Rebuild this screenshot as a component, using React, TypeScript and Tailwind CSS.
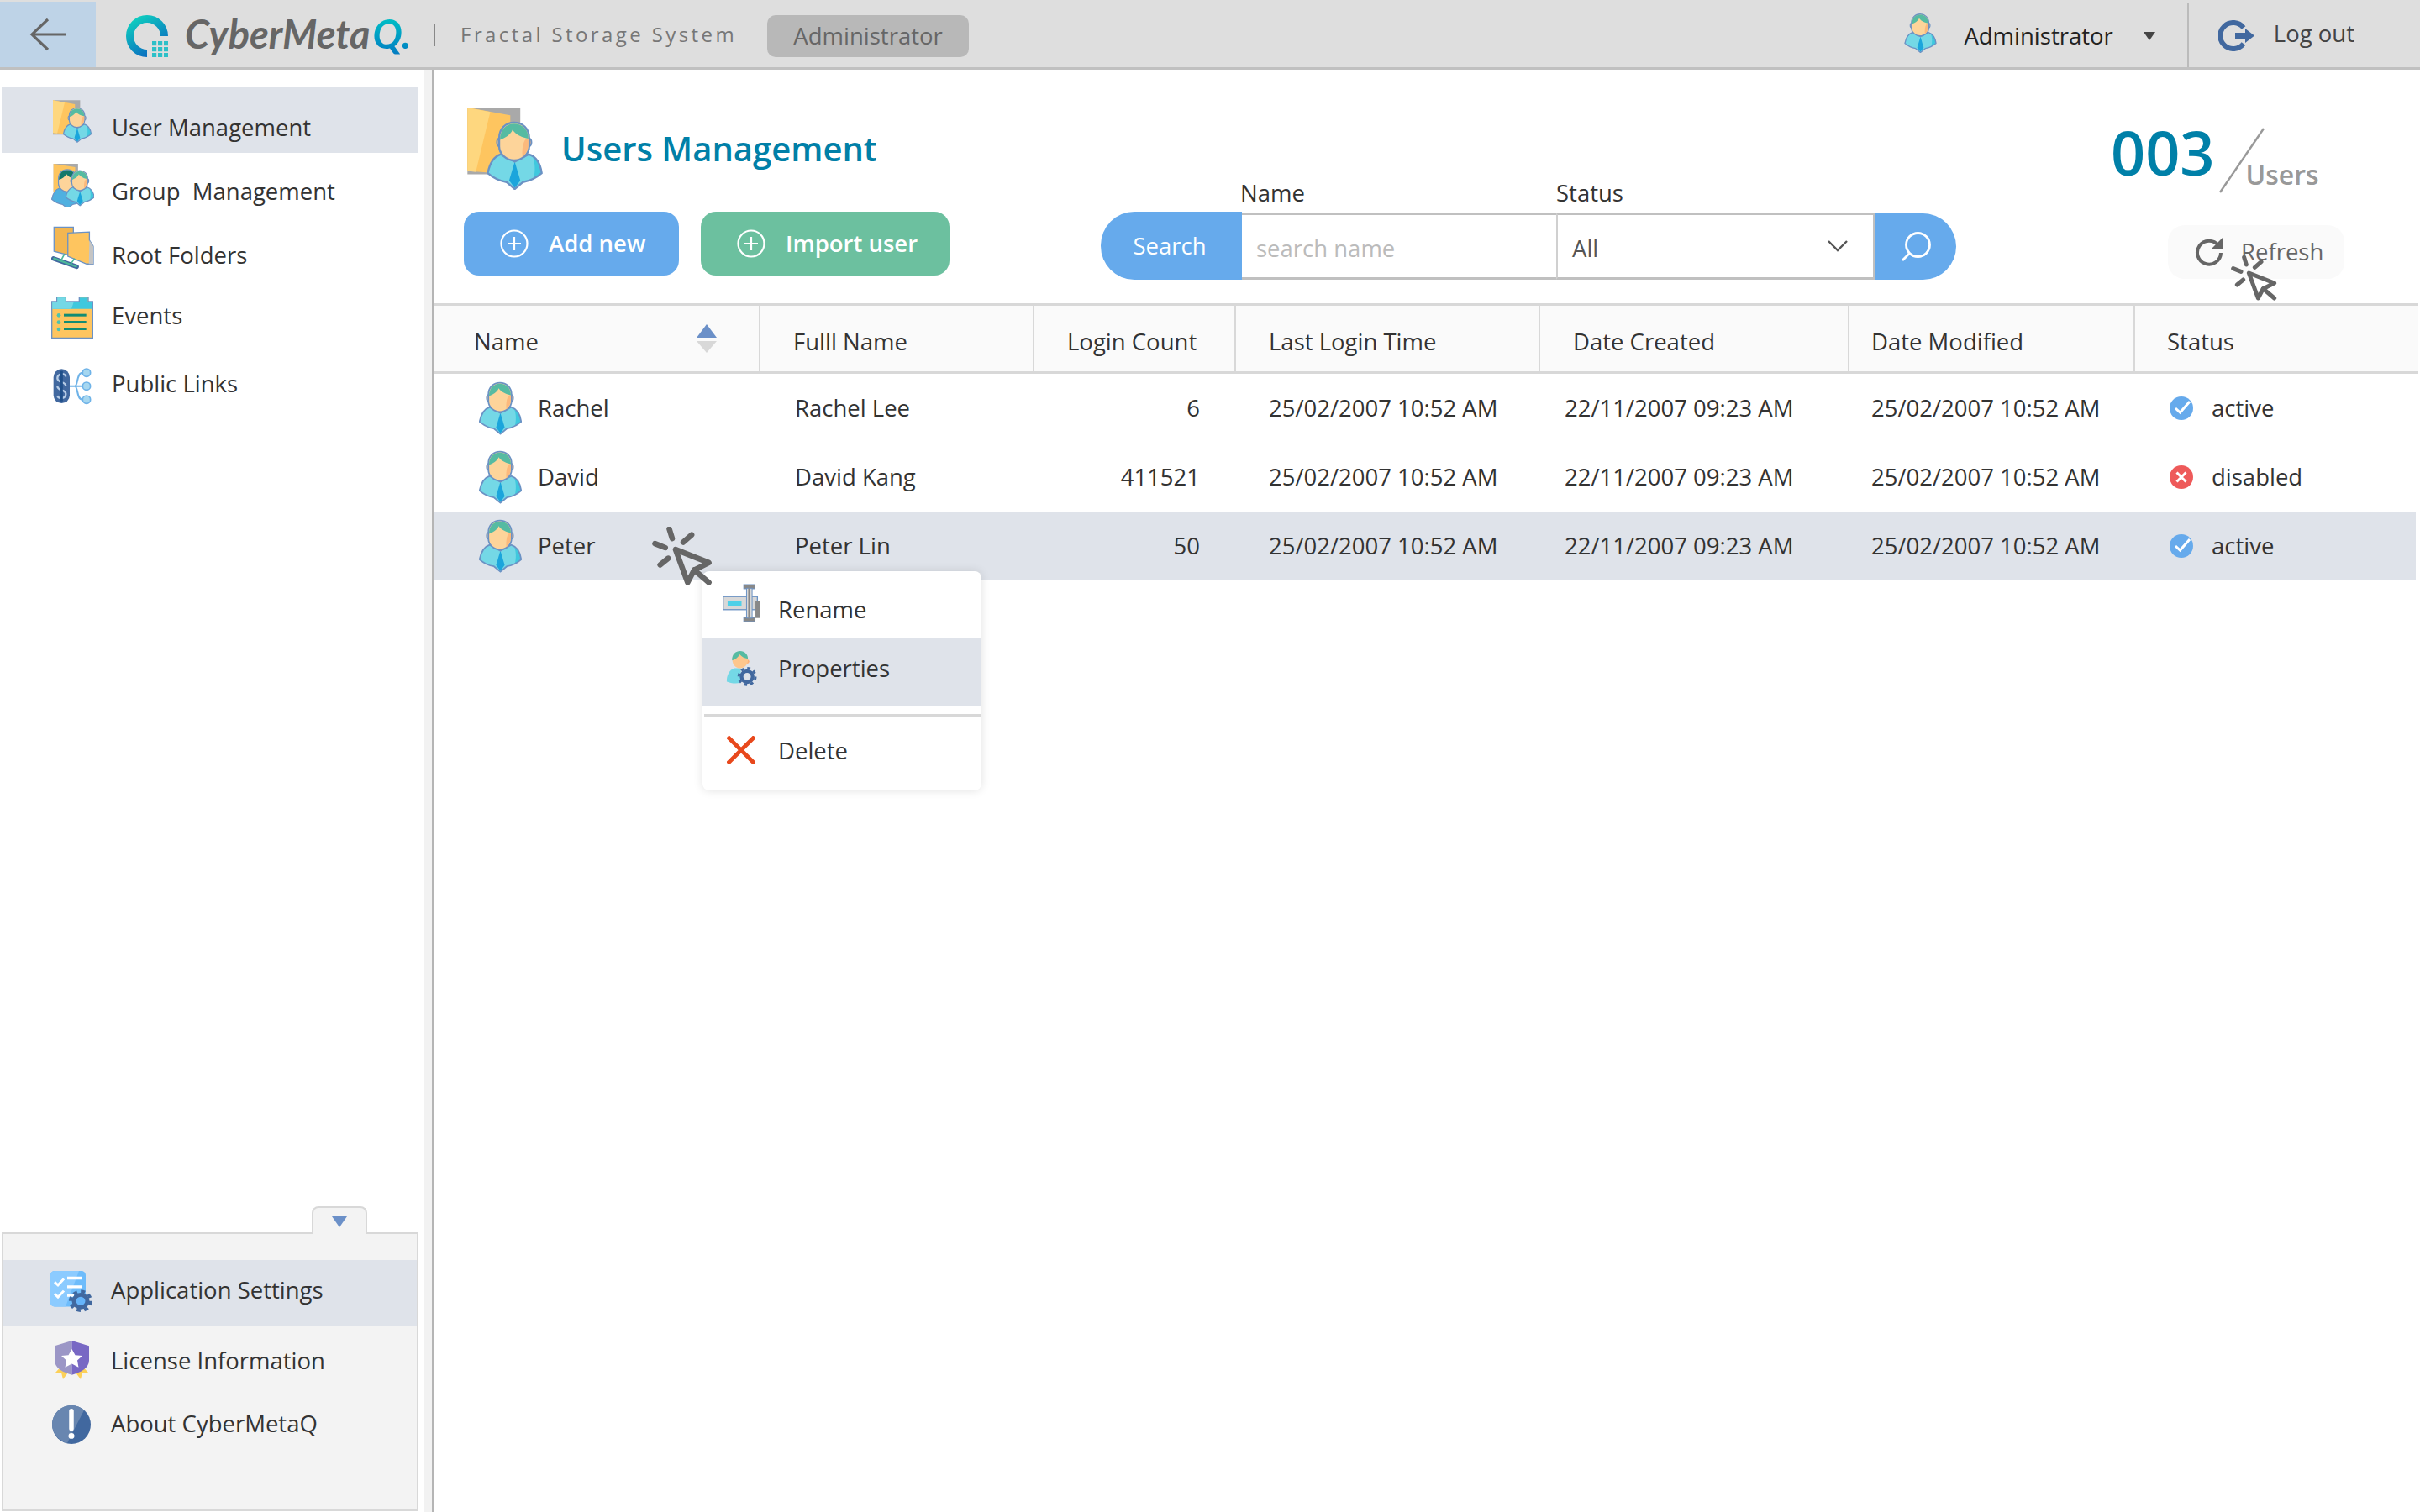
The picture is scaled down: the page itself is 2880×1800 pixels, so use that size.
import type { ReactNode } from "react";

const LINE = "#6b92c4";

function PersonShape() {
  return (
    <>
      <path d="M3 186 C10 150 25 126 50 118 L100 145 L150 118 C175 126 192 150 197 186 C175 205 150 215 130 218 L100 243 L70 218 C50 215 25 205 3 186Z" fill="#74d8e6" />
      <path d="M165 128 C182 142 192 160 197 186 C188 194 178 200 168 205 C174 180 174 150 165 128Z" fill="#3fc8de" />
      <path d="M100 145 L80 212 L100 240 L120 212Z" fill="#1ba5dc" />
      <path d="M3 186 C10 150 25 126 50 118 L100 145 L150 118 C175 126 192 150 197 186 C175 205 150 215 130 218 L100 243 L70 218 C50 215 25 205 3 186Z" fill="none" stroke={LINE} strokeWidth="7" strokeLinejoin="round" />
      <ellipse cx="46" cy="75" rx="10" ry="15" fill="#fcc78c" stroke={LINE} strokeWidth="6" />
      <ellipse cx="150" cy="75" rx="10" ry="15" fill="#fcb078" stroke={LINE} strokeWidth="6" />
      <path d="M44 60 C44 25 68 4 98 4 C128 4 152 25 152 60 L152 90 C152 118 125 140 98 140 C71 140 44 118 44 90Z" fill="#fdd49a" stroke={LINE} strokeWidth="7" />
      <path d="M128 128 C142 115 149 100 149 80 L149 60 C130 60 125 100 128 128Z" fill="#fcb97c" />
      <path d="M47 66 C47 28 70 8 98 8 C126 8 149 28 149 62 C130 58 105 50 92 30 C85 48 65 60 47 66Z" fill="#56bba2" />
    </>
  );
}

function Person({ className }: { className: string }) {
  return (
    <svg viewBox="0 0 200 246" className={className}>
      <PersonShape />
    </svg>
  );
}

function FolderUser({ className }: { className: string }) {
  return (
    <svg viewBox="0 0 270 296" className={className}>
      <path d="M0 0 H190 V240 H0Z" fill="#a9a9a9" />
      <path d="M0 0 L154 28 V240 L0 228Z" fill="#fec55f" />
      <path d="M0 0 L82 16 L30 232 L0 228Z" fill="#fed77f" />
      <g transform="translate(70 50)">
        <PersonShape />
      </g>
    </svg>
  );
}

function GroupIcon() {
  return (
    <svg viewBox="0 0 152 152" className="w-[51px] h-[51px]">
      <path d="M8 0 H95 V100 H8Z" fill="#a9a9a9" />
      <path d="M8 0 L85 12 V100 H8Z" fill="#fec55f" />
      <g transform="translate(0 18) scale(0.58)">
        <path d="M3 186 C10 150 25 126 50 118 L100 145 L150 118 C175 126 192 150 197 186 C175 205 150 215 130 218 L100 243 L70 218 C50 215 25 205 3 186Z" fill="#4fb0e0" stroke={LINE} strokeWidth="6" />
        <path d="M44 60 C44 25 68 4 98 4 C128 4 152 25 152 60 L152 90 C152 118 125 140 98 140 C71 140 44 118 44 90Z" fill="#fdd49a" stroke={LINE} strokeWidth="6" />
        <path d="M47 66 C47 28 70 8 98 8 C126 8 149 28 149 62 C130 58 105 50 92 30 C85 48 65 60 47 66Z" fill="#14786a" />
      </g>
      <g transform="translate(50 22) scale(0.52)">
        <PersonShape />
      </g>
    </svg>
  );
}

function RootIcon() {
  return (
    <svg viewBox="0 0 155 158" className="w-[51px] h-[53px]">
      <path d="M10 3 H80 V20 L80 108 L10 90Z" fill="#f3b650" stroke={LINE} strokeWidth="4" />
      <path d="M60 24 L138 20 V50 L152 72 V136 H128 L60 108Z" fill="#fec55f" stroke={LINE} strokeWidth="4" />
      <path d="M138 50 L152 72 V136 H136Z" fill="#c4c4c4" />
      <path d="M8 116 L92 146" stroke="#41689f" strokeWidth="16" strokeLinecap="round" />
      <path d="M10 116 L90 145" stroke="#4cb89a" strokeWidth="7" strokeLinecap="round" />
      <path d="M36 122 L48 100 M72 134 L84 116" stroke="#4cb89a" strokeWidth="5" />
    </svg>
  );
}

function EventsIcon() {
  return (
    <svg viewBox="0 0 150 150" className="w-[50px] h-[50px]">
      <path d="M20 2 H52 V18 H100 V2 H132 V18 H148 V148 H2 V18 H20Z" fill="#fec55f" stroke={LINE} strokeWidth="4" />
      <path d="M4 20 H22 V4 H50 V20 H102 V4 H130 V20 H146 V44 H4Z" fill="#3fc8de" />
      <path d="M4 20 H22 V4 H50 V20 H80 L72 44 H4Z" fill="#74d8e6" />
      <circle cx="27" cy="67" r="7" fill="#4cc3b0" />
      <circle cx="27" cy="92" r="7" fill="#4cc3b0" />
      <circle cx="27" cy="117" r="7" fill="#4cc3b0" />
      <rect x="45" y="62" width="80" height="9" fill="#128c74" />
      <rect x="45" y="87" width="80" height="9" fill="#128c74" />
      <rect x="45" y="111" width="80" height="9" fill="#128c74" />
    </svg>
  );
}

function LinksIcon() {
  return (
    <svg viewBox="0 0 138 135" className="w-[46px] h-[45px]">
      <rect x="2" y="7" width="58" height="122" rx="29" fill="#41689f" />
      <path d="M46 34 C44 20 16 22 16 40 C16 58 46 50 46 68 M16 102 C18 116 46 114 46 96 C46 78 16 86 16 68" fill="none" stroke="#b6cce6" strokeWidth="7" />
      <path d="M31 14 V122" stroke="#1f4f8a" strokeWidth="9" />
      <path d="M60 68 H105 M78 68 C90 68 84 20 105 20 M78 68 C90 68 84 116 105 116" fill="none" stroke="#6fb3e8" strokeWidth="6" />
      <circle cx="120" cy="20" r="14" fill="#a6d7f0" stroke="#6fb3e8" strokeWidth="5" />
      <circle cx="120" cy="68" r="14" fill="#a6d7f0" stroke="#6fb3e8" strokeWidth="5" />
      <circle cx="120" cy="116" r="14" fill="#a6d7f0" stroke="#6fb3e8" strokeWidth="5" />
    </svg>
  );
}

function SettingsIcon() {
  return (
    <svg viewBox="0 0 50 52" preserveAspectRatio="none" className="w-[50px] h-[49px]">
      <rect x="0" y="0" width="42" height="45" rx="5" fill="#6ebcfb" />
      <path d="M5 0 H34 L18 45 H5 C2 45 0 43 0 40 V5 C0 2 2 0 5 0Z" fill="#8ccbff" />
      <path d="M5 14 L9 18 L16 10 M5 29 L9 33 L16 25" fill="none" stroke="#fff" strokeWidth="3" />
      <path d="M20 9 H37 M20 20 H37 M20 31 H28" stroke="#fff" strokeWidth="3.5" />
      <circle cx="36" cy="38" r="12" fill="none" stroke="#41689f" strokeWidth="4" strokeDasharray="5 4.4" />
      <circle cx="36" cy="38" r="8" fill="#66b4fa" stroke="#41689f" strokeWidth="5" />
    </svg>
  );
}

function LicenseIcon() {
  return (
    <svg viewBox="0 0 41 52" preserveAspectRatio="none" className="w-[41px] h-[47px]">
      <path d="M6 36 L1 42 L8 42 L10 51 L16 42Z M35 36 L40 42 L33 42 L31 51 L25 42Z" fill="#fcd058" />
      <path d="M20.5 0 L0 7 V26 C0 36 10 42 20.5 45Z" fill="#9b96c6" />
      <path d="M20.5 0 L41 7 V26 C41 36 31 42 20.5 45Z" fill="#7868c4" />
      <path d="M20.5 11 L24.5 19 L33 20 L27 26 L28.5 35 L20.5 30.5 L12.5 35 L14 26 L8 20 L16.5 19Z" fill="#fff" />
    </svg>
  );
}

function AboutIcon() {
  return (
    <svg viewBox="0 0 46 48" preserveAspectRatio="none" className="w-[46px] h-[46px]">
      <ellipse cx="23" cy="24" rx="23" ry="24" fill="#41689f" />
      <path d="M23 0 C10 0 0 11 0 24 C0 35 8 44 18 47 L38 6 C34 2 29 0 23 0Z" fill="#6886b0" />
      <path d="M23 7 V29" stroke="#fff" strokeWidth="5.5" strokeLinecap="round" />
      <circle cx="23" cy="38" r="3.5" fill="#fff" />
    </svg>
  );
}

function Cursor({ className }: { className: string }) {
  return (
    <svg viewBox="0 0 165 160" className={className} fill="none" stroke="#666" strokeWidth="15" strokeLinecap="round" strokeLinejoin="round">
      <path d="M64 62 L97 152 L115 118 L155 98Z" />
      <path d="M115 118 L155 152" />
      <path d="M47 6 L55 32 M85 42 L108 22 M8 46 L36 57 M22 104 L44 86" />
    </svg>
  );
}

function PlusCircle() {
  return (
    <svg viewBox="0 0 34 34" className="w-[34px] h-[34px]" fill="none" stroke="#fff" strokeWidth="2.2">
      <circle cx="17" cy="17" r="15.5" />
      <path d="M17 9 V25 M9 17 H25" />
    </svg>
  );
}

function Tick() {
  return (
    <svg viewBox="0 0 28 28" className="w-[28px] h-[28px]">
      <circle cx="14" cy="14" r="14" fill="#66aaec" />
      <path d="M7 14 L12.5 19 L24 6" fill="none" stroke="#fff" strokeWidth="3" />
    </svg>
  );
}

function Cross() {
  return (
    <svg viewBox="0 0 28 28" className="w-[28px] h-[28px]">
      <circle cx="14" cy="14" r="14" fill="#ee5a5a" />
      <path d="M8.5 8.5 L19.5 19.5 M19.5 8.5 L8.5 19.5" stroke="#fff" strokeWidth="3" />
    </svg>
  );
}

type NavItem = {
  label: string;
  icon: ReactNode;
  row: string;
  iconTop: string;
  textTop: string;
};

const navItems: NavItem[] = [
  { label: "User Management", icon: <FolderUser className="w-[46px] h-[51px]" />, row: "h-[78px] bg-[#dfe3ea]", iconTop: "mt-[15px]", textTop: "mt-[29px]" },
  { label: "Group  Management", icon: <GroupIcon />, row: "h-[80px]", iconTop: "mt-[13px]", textTop: "mt-[27px]" },
  { label: "Root Folders", icon: <RootIcon />, row: "h-[80px]", iconTop: "mt-[7px]", textTop: "mt-[23px]" },
  { label: "Events", icon: <EventsIcon />, row: "h-[80px]", iconTop: "mt-[11px]", textTop: "mt-[15px]" },
  { label: "Public Links", icon: <LinksIcon />, row: "h-[80px]", iconTop: "mt-[15px]", textTop: "mt-[16px]" },
];

const bottomItems: NavItem[] = [
  { label: "Application Settings", icon: <SettingsIcon />, row: "h-[78px] bg-[#dfe3ea]", iconTop: "mt-[13px]", textTop: "mt-[17px]" },
  { label: "License Information", icon: <LicenseIcon />, row: "h-[80px]", iconTop: "mt-[18px]", textTop: "mt-[23px]" },
  { label: "About CyberMetaQ", icon: <AboutIcon />, row: "h-[80px]", iconTop: "mt-[15px]", textTop: "mt-[18px]" },
];

function NavRow({ item, inset }: { item: NavItem; inset: string }) {
  return (
    <div className={`flex items-start ${inset} ${item.row}`}>
      <div className={`w-[52px] flex justify-center shrink-0 ${item.iconTop}`}>{item.icon}</div>
      <span className={`ml-[21px] leading-[38px] whitespace-pre ${item.textTop}`}>{item.label}</span>
    </div>
  );
}

const users = [
  { name: "Rachel", full: "Rachel Lee", count: "6", status: "active", row: "h-[81px]" },
  { name: "David", full: "David Kang", count: "411521", status: "disabled", row: "h-[84px]" },
  { name: "Peter", full: "Peter Lin", count: "50", status: "active", row: "h-[80px] bg-[#dfe3ea]" },
];

const COLS = "grid grid-cols-[389px_326px_240px_362px_368px_340px_1fr]";

function HeadCell({ pad, label, extra, last }: { pad: string; label: string; extra?: ReactNode; last?: boolean }) {
  return (
    <div className={`flex items-center ${pad} ${last ? "" : "border-r-[2px] border-[#d8d8d8]"}`}>
      <span className="pt-[8px]">{label}</span>
      {extra}
    </div>
  );
}

export default function App() {
  return (
    <div className="relative w-[2880px] h-[1800px] overflow-hidden bg-white text-[#333] text-[27.5px] font-['Open_Sans',sans-serif]">
      {/* Top bar */}
      <header className="flex h-[83px] bg-[#dedede] border-b-[3px] border-[#c0c0c0]">
        <div className="w-[114px] mt-[2px] bg-[#bed3e7] flex items-center justify-center">
          <svg viewBox="0 0 44 40" className="w-[44px] h-[40px]" fill="none" stroke="#666" strokeWidth="3.2">
            <path d="M22 2 L3 20 L22 38 M3 20 H43" />
          </svg>
        </div>
        <svg viewBox="0 0 50 50" className="ml-[36px] mt-[18px] w-[50px] h-[50px]">
          <defs>
            <linearGradient id="ring" x1="0" y1="0" x2="0.6" y2="1">
              <stop offset="0" stopColor="#0fd2bf" />
              <stop offset="1" stopColor="#0b70c0" />
            </linearGradient>
          </defs>
          <path d="M45.5 25 A20.5 20.5 0 1 0 25 45.5" fill="none" stroke="url(#ring)" strokeWidth="9" />
          {[31, 38, 45].map((y) =>
            [31, 38, 45].map((x) => <rect key={`${x}-${y}`} x={x} y={y} width="5.2" height="5.2" fill="#2cc0c8" />),
          )}
        </svg>
        <div className="ml-[20px] mt-[8px] h-[64px] flex font-['Lato',sans-serif] font-bold italic text-[47px] leading-[64px] text-[#666]">
          <span>CyberMeta</span>
          <span className="ml-[3px] bg-linear-to-b from-[#10d4c4] to-[#0b70c0] bg-clip-text text-transparent pr-[6px]">Q.</span>
        </div>
        <div className="ml-[21px] mt-[29px] w-[2px] h-[26px] bg-[#888]" />
        <span className="ml-[30px] mt-[22px] text-[24px] leading-[38px] tracking-[3.4px] text-[#777]">Fractal Storage System</span>
        <div className="ml-[36px] mt-[18px] w-[240px] h-[50px] rounded-[10px] bg-[#b8b8b8] text-[#666] flex items-center justify-center">Administrator</div>
        <div className="ml-auto flex">
          <Person className="mt-[16px] w-[39px] h-[47px]" />
          <span className="ml-[32px] mt-[24px] leading-[38px] text-[#222]">Administrator</span>
          <div className="ml-[36px] mt-[38px] w-0 h-0 border-x-[7px] border-x-transparent border-t-[10px] border-t-[#444]" />
          <div className="ml-[38px] mt-[4px] w-[2px] h-[76px] bg-[#bbb]" />
          <svg viewBox="0 0 43 37" className="ml-[35px] mt-[24px] w-[43px] h-[37px]">
            <path d="M30 9 A15.5 15.5 0 1 0 30 28" fill="none" stroke="#41689f" strokeWidth="6" />
            <path d="M20 15 H32 V10 L43 18.5 L32 27 V22 H20Z" fill="#41689f" />
          </svg>
          <span className="ml-[23px] mr-[78px] mt-[21px] leading-[38px] text-[#444]">Log out</span>
        </div>
      </header>

      <div className="flex h-[1717px]">
        {/* Sidebar */}
        <aside className="w-[516px] shrink-0 flex border-r-[2px] border-[#b5b5b5]">
          <div className="w-[505px] flex flex-col">
            <nav className="pt-[21px] ml-[2px] w-[496px]">
              {navItems.map((item) => (
                <NavRow key={item.label} item={item} inset="pl-[58px]" />
              ))}
            </nav>
            <div className="relative mt-auto ml-[2px] w-[496px] h-[332px] mb-[1px] bg-[#f3f3f3] border-[2px] border-[#d8d8d8] pt-[31px]">
              <div className="absolute -top-[33px] left-[367px] w-[66px] h-[33px] bg-[#f3f3f3] border-x-[2px] border-t-[2px] border-[#d8d8d8] rounded-t-[8px] flex justify-center pt-[10px]">
                <div className="w-0 h-0 border-x-[9px] border-x-transparent border-t-[13px] border-t-[#6b90c8]" />
              </div>
              {bottomItems.map((item) => (
                <NavRow key={item.label} item={item} inset="pl-[55px]" />
              ))}
            </div>
          </div>
          <div className="w-[9px] bg-[#f2f2f2]" />
        </aside>

        {/* Main */}
        <main className="flex-1 min-w-0">
          <div className="flex h-[278px]">
            <div className="w-[794px] shrink-0 pl-[36px] pt-[45px]">
              <div className="flex items-center h-[98px]">
                <FolderUser className="ml-[4px] w-[90px] h-[98px]" />
                <h1 className="ml-[22px] text-[40px] font-semibold text-[#0080a8] leading-[60px]">Users Management</h1>
              </div>
              <div className="flex mt-[26px] gap-[26px] text-white font-[560]">
                <div className="w-[256px] h-[76px] rounded-[18px] bg-[#66aaec] flex items-center pl-[43px]">
                  <PlusCircle />
                  <span className="ml-[24px] -mt-[1px]">Add new</span>
                </div>
                <div className="w-[296px] h-[76px] rounded-[18px] bg-[#6cc09f] flex items-center pl-[43px]">
                  <PlusCircle />
                  <span className="ml-[24px] -mt-[1px]">Import user</span>
                </div>
              </div>
            </div>

            <div className="w-[1018px] shrink-0 pt-[128px]">
              <div className="flex pl-[166px] leading-[38px]">
                <span className="w-[376px]">Name</span>
                <span>Status</span>
              </div>
              <div className="flex h-[81px] mt-[3px]">
                <div className="w-[168px] pr-[4px] rounded-l-[40px] bg-[#66aaec] text-white font-medium flex items-center justify-center">Search</div>
                <div className="w-[374px] border-y-[3px] border-[#c0c0c0] flex items-center pl-[17px] pt-[6px] text-[#bbb] mt-[1px]">search name</div>
                <div className="w-[379px] border-y-[3px] border-x-[2px] border-[#c0c0c0] border-l-[#d0d0d0] flex items-center pl-[17px] pr-[30px] pt-[6px] justify-between text-[#555] mt-[1px]">
                  <span>All</span>
                  <svg viewBox="0 0 24 14" className="w-[24px] h-[14px] -mt-[6px]" fill="none" stroke="#555" strokeWidth="2.4">
                    <path d="M1 1 L12 12 L23 1" />
                  </svg>
                </div>
                <div className="w-[97px] mt-[2px] h-[79px] rounded-r-[40px] bg-[#66aaec] flex items-center justify-center">
                  <svg viewBox="0 0 36 36" className="w-[36px] h-[36px]" fill="none" stroke="#fff" strokeWidth="2.8">
                    <circle cx="20.5" cy="15.5" r="14" />
                    <path d="M10 26 L2 34" />
                  </svg>
                </div>
              </div>
            </div>

            <div className="flex-1 pt-[61px]">
              <div className="flex items-start h-[84px] ml-[184px]">
                <span className="text-[72px] font-semibold leading-[74px] text-[#0080a8]">003</span>
                <svg viewBox="0 0 54 78" className="ml-[5px] mt-[8px] w-[54px] h-[78px] shrink-0" fill="none" stroke="#999" strokeWidth="2.4">
                  <path d="M53 1 L1 77" />
                </svg>
                <span className="-ml-[22px] mt-[41px] text-[32px] leading-[46px] font-semibold text-[#999]">Users</span>
              </div>
              <div className="ml-[252px] mt-[40px] w-[210px] h-[64px] rounded-[20px] bg-[#fafafa] flex items-center pl-[32px] text-[#666]">
                <svg viewBox="0 0 34 34" className="w-[34px] h-[34px]">
                  <path d="M28 9 A14 14 0 1 0 31 18" fill="none" stroke="#666" strokeWidth="4" />
                  <path d="M33 0 V14 H19Z" fill="#666" />
                </svg>
                <span className="ml-[21px]">Refresh</span>
              </div>
            </div>
          </div>

          {/* Table */}
          <div className={`${COLS} mr-[2px] h-[84px] bg-[#fafafa] border-y-[3px] border-[#d8d8d8] font-[530]`}>
            <HeadCell
              pad="pl-[48px] pr-[50px] justify-between"
              label="Name"
              extra={
                <div className="flex flex-col gap-[4px]">
                  <div className="w-0 h-0 border-x-[12px] border-x-transparent border-b-[16px] border-b-[#6b90c8]" />
                  <div className="w-0 h-0 border-x-[12px] border-x-transparent border-t-[14px] border-t-[#d8d8d8]" />
                </div>
              }
            />
            <HeadCell pad="pl-[39px]" label="Fulll Name" />
            <HeadCell pad="pl-[39px]" label="Login Count" />
            <HeadCell pad="pl-[39px]" label="Last Login Time" />
            <HeadCell pad="pl-[39px]" label="Date Created" />
            <HeadCell pad="pl-[26px]" label="Date Modified" />
            <HeadCell pad="pl-[38px]" label="Status" last />
          </div>
          <div className="mr-[5px]">
            {users.map((u) => (
              <div key={u.name} className={`${COLS} items-center ${u.row}`}>
                <div className="flex items-center pl-[54px]">
                  <Person className="w-[51px] h-[64px]" />
                  <span className="ml-[19px]">{u.name}</span>
                </div>
                <div className="pl-[41px]">{u.full}</div>
                <div className="pr-[43px] text-right">{u.count}</div>
                <div className="pl-[39px]">25/02/2007 10:52 AM</div>
                <div className="pl-[29px]">22/11/2007 09:23 AM</div>
                <div className="pl-[26px]">25/02/2007 10:52 AM</div>
                <div className="pl-[41px] flex items-center">
                  {u.status === "active" ? <Tick /> : <Cross />}
                  <span className="ml-[22px]">{u.status}</span>
                </div>
              </div>
            ))}
          </div>
        </main>
      </div>

      {/* Context menu */}
      <div className="absolute left-[836px] top-[680px] w-[332px] h-[261px] bg-white rounded-[8px] shadow-[0_0_12px_rgba(0,0,0,0.12)] overflow-hidden">
        <div className="h-[80px] flex items-center pl-[24px]">
          <div className="w-[45px] flex justify-center -mt-[4px]">
            <svg viewBox="0 0 136 137" className="w-[45px] h-[46px]">
              <rect x="2" y="45" width="123" height="47" fill="#d8d8d8" stroke={LINE} strokeWidth="4" />
              <rect x="18" y="60" width="50" height="18" fill="#4fd0e8" />
              <rect x="76" y="2" width="40" height="15" fill="#888" stroke={LINE} strokeWidth="3" />
              <rect x="76" y="120" width="40" height="15" fill="#888" stroke={LINE} strokeWidth="3" />
              <rect x="86" y="15" width="20" height="107" fill="#d8d8d8" stroke={LINE} strokeWidth="3" />
              <rect x="92" y="15" width="6" height="107" fill="#888" />
              <rect x="118" y="62" width="18" height="60" fill="#888" />
            </svg>
          </div>
          <span className="ml-[21px] pt-[12px]">Rename</span>
        </div>
        <div className="h-[81px] bg-[#dfe3ea] flex items-center pl-[24px] pb-[10px]">
          <div className="w-[45px] flex justify-center">
            <svg viewBox="0 0 110 127" className="w-[37px] h-[42px]">
              <path d="M30 62 C12 66 0 90 2 110 C15 116 35 118 52 114 L52 62Z" fill="#74d8e6" />
              <circle cx="76" cy="38" r="7" fill="#fcb078" />
              <path d="M22 30 C22 10 35 2 50 2 C66 2 78 14 78 32 C78 50 65 62 50 62 C35 62 22 50 22 30Z" fill="#fdc68c" />
              <path d="M21 34 C20 10 35 0 50 0 C66 0 78 12 78 28 C65 26 55 20 48 12 C42 24 32 30 21 34Z" fill="#56bba2" />
              <circle cx="75" cy="92" r="30" fill="none" stroke="#41689f" strokeWidth="9" strokeDasharray="11 12.5" />
              <circle cx="75" cy="92" r="20" fill="none" stroke="#41689f" strokeWidth="13" />
            </svg>
          </div>
          <span className="ml-[21px]">Properties</span>
        </div>
        <div className="mt-[9px] ml-[2px] h-[3px] bg-[#d8d8d8]" />
        <div className="h-[80px] flex items-center pl-[24px]">
          <div className="w-[45px] flex justify-center -ml-[1px]">
            <svg viewBox="0 0 34 34" className="w-[34px] h-[34px]" fill="none" stroke="#e8481c" strokeWidth="4.8">
              <path d="M1 1 L33 33 M33 1 L1 33" />
            </svg>
          </div>
          <span className="ml-[22px] pt-[2px]">Delete</span>
        </div>
      </div>

      <Cursor className="absolute left-[776px] top-[627px] w-[72px] h-[70px]" />
      <Cursor className="absolute left-[2655px] top-[304px] w-[55px] h-[54px]" />
    </div>
  );
}
